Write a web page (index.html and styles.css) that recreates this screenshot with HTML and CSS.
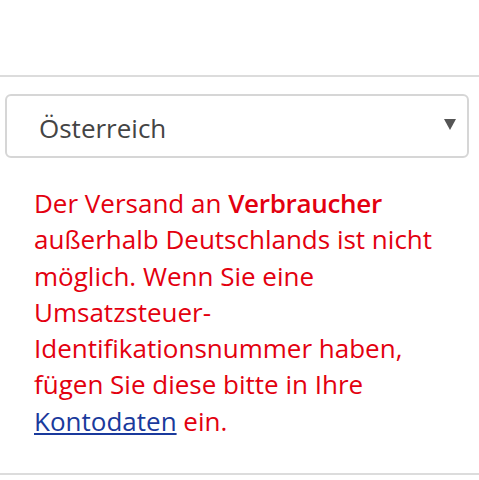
FILE: index.html
```html
<!DOCTYPE html>
<html lang="de">
<head>
<meta charset="utf-8">
<link rel="stylesheet" href="styles.css">
</head>
<body>
<div class="page">
  <hr class="rule">
  <div class="select">
    <span class="select-value">Österreich</span>
    <svg class="select-arrow" width="12" height="11" viewBox="0 0 12 11"><path d="M0 0H12L6 11Z" fill="#555"/></svg>
  </div>
  <p class="notice">Der Versand an <strong>Verbraucher</strong> außerhalb Deutschlands ist nicht möglich. Wenn Sie eine Umsatzsteuer-Identifikationsnummer haben, fügen Sie diese bitte in Ihre <a href="#" class="link">Kontodaten</a> ein.</p>
  <hr class="rule rule-bottom">
</div>
</body>
</html>
```
FILE: styles.css
```css
html, body {
  margin: 0;
  padding: 0;
  background: #fff;
}
.page {
  width: 479px;
  padding-top: 75px;
  font-family: "Open Sans", "Noto Sans", sans-serif;
}
.rule {
  margin: 0;
  border: 0;
  height: 2px;
  background: #dcdcdc;
}
.select {
  margin: 17px 10px 0 5px;
  height: 64px;
  border: 2px solid #d6d6d6;
  border-radius: 6px;
  display: flex;
  align-items: center;
  justify-content: space-between;
  padding: 0 11px 0 32px;
  box-sizing: border-box;
}
.select-value {
  font-size: 26px;
  color: #444;
  padding-top: 4px;
}
.select-arrow {
  display: block;
  margin-top: -4px;
}
.notice {
  margin: 27px 20px 0 34px;
  font-size: 26px;
  line-height: 36.3px;
  color: #e3000f;
}
.notice strong {
  font-weight: 600;
  letter-spacing: -0.3px;
}
.link {
  color: #1a3a9c;
  text-decoration: underline;
}
.rule-bottom {
  margin-top: 34px;
}
```
